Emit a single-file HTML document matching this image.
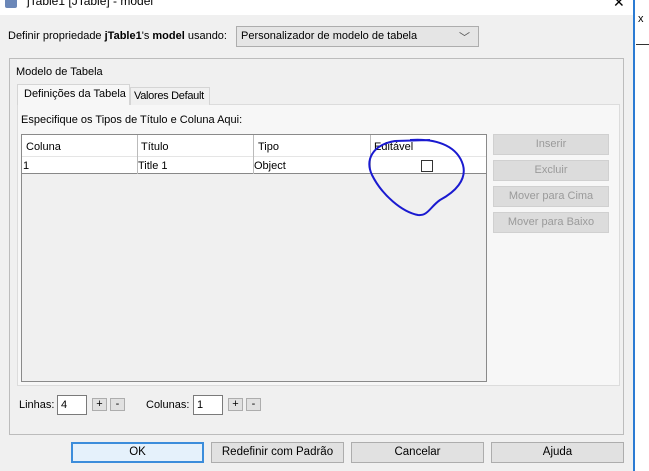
<!DOCTYPE html>
<html><head><meta charset="utf-8"><style>
*{box-sizing:border-box;margin:0;padding:0}
body{width:649px;height:471px;background:#fff;font-family:"Liberation Sans",sans-serif;font-size:11px;color:#000;position:relative;overflow:hidden}
.a{position:absolute;white-space:nowrap}
.btn{position:absolute;background:#e1e1e1;border:1px solid #adadad;text-align:center;font-size:11.5px;white-space:nowrap}
.dis{position:absolute;background:#dcdcdc;border:1px solid #d0d0d0;color:#9a9a9a;text-align:center;line-height:18px;font-size:11px;white-space:nowrap}
.sm{position:absolute;background:#e1e1e1;border:1px solid #adadad;width:15px;height:13px;font-size:11px;line-height:11px;text-align:center}
.inp{position:absolute;background:#fff;border:1px solid #7a7a7a;height:20px;padding-left:3px;line-height:18px}
</style></head><body>
<div class="a" style="left:0;top:0;width:633px;height:15px;background:#fff"></div>
<div class="a" style="left:5px;top:-4px;width:12px;height:12px;background:#6b87b8;border-radius:2px"></div>
<div class="a" style="left:27px;top:-6px;font-size:12px">jTable1 [JTable] - model</div>
<div class="a" style="left:613px;top:-6px;font-size:14px">✕</div>
<div class="a" style="left:0;top:15px;width:633px;height:456px;background:#f0f0f0"></div>
<div class="a" style="left:633px;top:0;width:2px;height:471px;background:#2b7bd3"></div>
<div class="a" style="left:638px;top:13px;font-size:11px">x</div>
<div class="a" style="left:636px;top:44px;width:13px;height:1px;background:#333"></div>

<div class="a" style="left:8px;top:30px">Definir propriedade <b>jTable1</b>'s <b>model</b> usando:</div>
<div class="a" style="left:236px;top:26px;width:243px;height:21px;background:#e5e5e5;border:1px solid #adadad;padding:3px 0 0 4px">Personalizador de modelo de tabela<span style="position:absolute;right:8px;top:2px;color:#555">﹀</span></div>

<div class="a" style="left:9px;top:58px;width:615px;height:377px;border:1px solid #bcbcbc"></div>
<div class="a" style="left:16px;top:66px">Modelo de Tabela</div>
<div class="a" style="left:17px;top:104px;width:603px;height:282px;background:#f7f7f7;border:1px solid #dcdcdc"></div>
<div class="a" style="left:130px;top:87px;width:80px;height:18px;border:1px solid #d5d5d5;border-bottom:none;padding:2px 0 0 3px;background:#f0f0f0;letter-spacing:-0.3px">Valores Default</div>
<div class="a" style="left:17px;top:84px;width:113px;height:21px;border:1px solid #d5d5d5;border-bottom:none;background:#f7f7f7;padding:3px 0 0 6px">Definições da Tabela</div>
<div class="a" style="left:21px;top:114px">Especifique os Tipos de Título e Coluna Aqui:</div>

<div class="a" style="left:21px;top:134px;width:466px;height:248px;border:1px solid #8a8a8a;background:#f0f0f0"></div>
<div class="a" style="left:22px;top:135px;width:464px;height:22px;background:#fff;border-bottom:1px solid #e5e5e5"></div>
<div class="a" style="left:22px;top:157px;width:464px;height:17px;background:#fff;border-bottom:1px solid #888"></div>
<div class="a" style="left:137px;top:135px;width:1px;height:39px;background:#bbb"></div>
<div class="a" style="left:253px;top:135px;width:1px;height:39px;background:#bbb"></div>
<div class="a" style="left:370px;top:135px;width:1px;height:39px;background:#bbb"></div>
<div class="a" style="left:26px;top:141px">Coluna</div>
<div class="a" style="left:141px;top:141px">Título</div>
<div class="a" style="left:258px;top:141px">Tipo</div>
<div class="a" style="left:374px;top:141px">Editável</div>
<div class="a" style="left:23px;top:160px">1</div>
<div class="a" style="left:138px;top:160px">Title 1</div>
<div class="a" style="left:254px;top:160px">Object</div>
<div class="a" style="left:421px;top:160px;width:12px;height:12px;border:1px solid #333;background:#fff"></div>

<div class="dis" style="left:493px;top:134px;width:116px;height:21px">Inserir</div>
<div class="dis" style="left:493px;top:160px;width:116px;height:21px">Excluir</div>
<div class="dis" style="left:493px;top:186px;width:116px;height:21px">Mover para Cima</div>
<div class="dis" style="left:493px;top:212px;width:116px;height:21px">Mover para Baixo</div>

<svg class="a" style="left:0;top:0" width="649" height="471"><path d="M410,140 C440,138 458,148 463,165 C467,180 455,192 440,200 C430,207 428,216 418,215 C402,212 382,195 372,175 C365,160 372,145 395,141 L430,140" fill="none" stroke="#1a1ad0" stroke-width="2"/></svg>

<div class="a" style="left:19px;top:399px">Linhas:</div>
<div class="inp" style="left:57px;top:395px;width:30px">4</div>
<div class="sm" style="left:92px;top:398px">+</div>
<div class="sm" style="left:110px;top:398px">-</div>
<div class="a" style="left:146px;top:399px">Colunas:</div>
<div class="inp" style="left:193px;top:395px;width:30px">1</div>
<div class="sm" style="left:228px;top:398px">+</div>
<div class="sm" style="left:246px;top:398px">-</div>

<div class="btn" style="left:71px;top:442px;width:133px;height:21px;line-height:17px;background:#e5f1fb;border:2px solid #3c8ddb">OK</div>
<div class="btn" style="left:211px;top:442px;width:133px;height:21px;line-height:19px">Redefinir com Padrão</div>
<div class="btn" style="left:351px;top:442px;width:133px;height:21px;line-height:19px">Cancelar</div>
<div class="btn" style="left:491px;top:442px;width:133px;height:21px;line-height:19px">Ajuda</div>
</body></html>
